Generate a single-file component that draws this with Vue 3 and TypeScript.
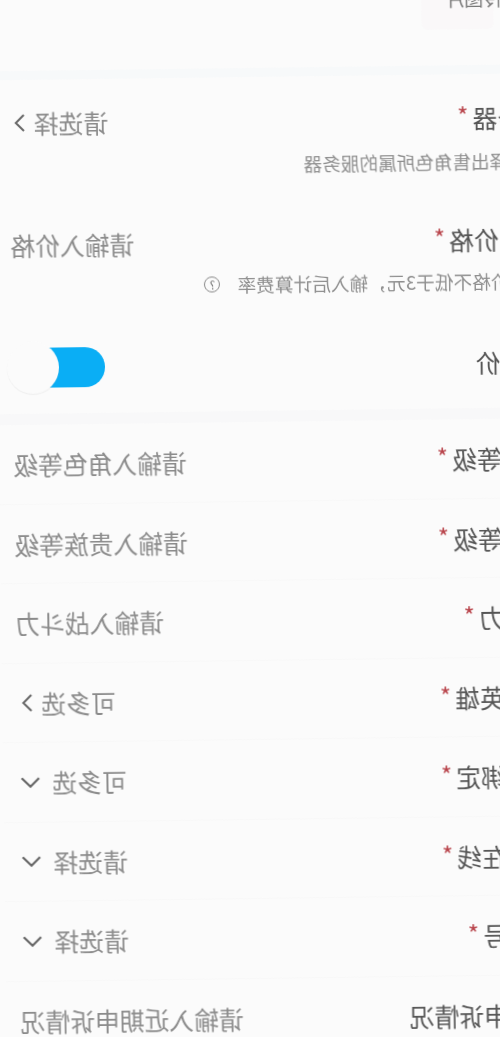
<script setup lang="ts">
interface Row {
  label: string
  required: boolean
  value: string
  icon?: 'right' | 'down'
}

const upperRows: Row[] = [
  { label: '角色等级', required: true, value: '请输入角色等级' },
  { label: '贵族等级', required: true, value: '请输入贵族等级' },
  { label: '战斗力', required: true, value: '请输入战斗力' },
  { label: '出售英雄', required: true, value: '可多选', icon: 'right' },
  { label: '是否绑定', required: true, value: '可多选', icon: 'down' },
  { label: '是否在线', required: true, value: '请选择', icon: 'down' },
  { label: '微信号', required: true, value: '请选择', icon: 'down' },
  { label: '近期申诉情况', required: false, value: '请输入近期申诉情况' }
]
</script>

<template>
  <div class="viewport">
    <div class="stage">
      <main class="sheet">
        <div class="top">
          <div class="upload">上传图片</div>
        </div>
        <div class="band"></div>

        <section class="block tall">
          <div class="line">
            <span class="label">服务器<i class="star">*</i></span>
            <span class="value">请选择<svg class="chev-right" viewBox="0 0 12 20"><path d="M2 2l8 8-8 8" /></svg></span>
          </div>
          <p class="desc">请选择出售角色所属的服务器</p>
        </section>

        <section class="block tall">
          <div class="line">
            <span class="label">出售价格<i class="star">*</i></span>
            <span class="value">请输入价格</span>
          </div>
          <p class="desc second-desc">出售价格不低于3元，输入后计算费率<span class="help">?</span></p>
        </section>

        <section class="block switch-row">
          <span class="label">可议价</span>
          <span class="switch"><span class="knob"></span></span>
        </section>
        <div class="band second"></div>

        <section v-for="row in upperRows" :key="row.label" class="block row">
          <span class="label">{{ row.label }}<i v-if="row.required" class="star">*</i></span>
          <span class="value" :class="{ wide: row.icon === 'down' }">
            {{ row.value }}
            <svg v-if="row.icon === 'right'" class="chev-right" viewBox="0 0 12 20"><path d="M2 2l8 8-8 8" /></svg>
            <svg v-else-if="row.icon === 'down'" class="chev-down" viewBox="0 0 20 12"><path d="M2 2l8 8 8-8" /></svg>
          </span>
        </section>
      </main>
    </div>
  </div>
</template>

<style>
html, body { margin: 0; background: #fbfbfb; }
</style>

<style scoped>
.viewport {
  width: 500px;
  height: 1037px;
  overflow: hidden;
  background: #fbfbfb;
}
.stage {
  width: 500px;
  height: 1037px;
  transform: rotate(-0.75deg) scaleX(-1);
  filter: blur(0.45px);
}
.sheet {
  margin-left: -52px;
  width: 552px;
  font-family: "Noto Sans CJK SC", "Noto Sans", sans-serif;
  color: #555;
}
.top {
  height: 68px;
  display: flex;
  align-items: flex-start;
}
.upload {
  margin-left: 52px;
  margin-top: -78px;
  width: 72px;
  height: 110px;
  box-sizing: border-box;
  padding: 0 24px 17px 0;
  background: #faf8f9;
  border-radius: 6px;
  display: flex;
  align-items: flex-end;
  justify-content: flex-end;
  font-size: 19px;
  line-height: 28px;
  color: #777;
  white-space: nowrap;
}
.band {
  height: 9px;
  background: #f7f9fa;
}
.band.second {
  height: 11px;
  background: #f8f8f9;
}
.block {
  padding-right: 14px;
}
.tall {
  height: 122px;
  padding-top: 24px;
  box-sizing: border-box;
}
.line,
.row,
.switch-row {
  display: flex;
  align-items: center;
  justify-content: space-between;
}
.line {
  height: 38px;
}
.switch-row {
  height: 90px;
  box-sizing: border-box;
  padding-right: 0;
  padding-bottom: 2px;
}
.row {
  height: 79.5px;
  box-sizing: border-box;
  border-bottom: 1px solid #f8f8f8;
}
.label {
  font-size: 24.8px;
  line-height: 38px;
  color: #555;
  white-space: nowrap;
  display: flex;
}
.star {
  font-style: normal;
  font-size: 24px;
  line-height: 34px;
  color: #b8434a;
  margin-left: 4px;
}
.value {
  font-size: 24.8px;
  line-height: 38px;
  color: #8b8b8b;
  white-space: nowrap;
  display: flex;
  align-items: center;
  gap: 8px;
}
.value.wide {
  gap: 11px;
  padding-right: 2px;
}
.chev-right {
  width: 12px;
  height: 20px;
  margin-right: 5px;
  fill: none;
  stroke: #666;
  stroke-width: 2;
}
.chev-down {
  width: 22px;
  height: 13px;
  fill: none;
  stroke: #666;
  stroke-width: 2;
}
.desc {
  margin: 12px 0 0;
  padding-left: 2px;
  font-size: 18.6px;
  line-height: 26px;
  color: #8f8f8f;
  white-space: nowrap;
  display: flex;
  align-items: center;
}
.second-desc {
  margin-top: 10px;
  letter-spacing: 0.1px;
}
.help {
  margin-left: 17px;
  width: 14px;
  height: 14px;
  border: 1.5px solid #888;
  border-radius: 50%;
  font-size: 11.5px;
  line-height: 14px;
  text-align: center;
  color: #666;
  display: inline-block;
}
.switch {
  position: relative;
  width: 86px;
  height: 40px;
  margin-right: 21px;
  background: #0aaef5;
  border-radius: 20px;
}
.knob {
  position: absolute;
  right: -12px;
  top: -6px;
  width: 52px;
  height: 52px;
  border-radius: 50%;
  background: #fbfbfb;
  box-shadow: 0 1px 1px rgba(0, 0, 0, 0.06);
}
</style>
